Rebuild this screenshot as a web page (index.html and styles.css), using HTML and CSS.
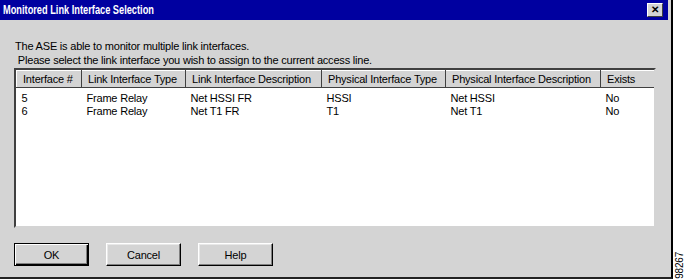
FILE: index.html
```html
<!DOCTYPE html>
<html lang="en">
<head>
    <meta charset="UTF-8">
    <title>Monitored Link Interface Selection</title>
    <link rel="stylesheet" href="styles.css">
</head>
<body>
    <div class="page">
        <div class="window">
            <div class="titlebar">
                <span class="title">Monitored Link Interface Selection</span>
                <span class="close-btn">&#x2715;</span>
            </div>

            <div class="content">
                <p class="intro">The ASE is able to monitor multiple link interfaces.<br>&nbsp;Please select the link interface you wish to assign to the current access line.</p>

                <!-- Lista de interfaces -->
                <div class="listview">
                    <table>
                        <thead>
                            <tr>
                                <th class="c1">Interface #</th>
                                <th class="c2">Link Interface Type</th>
                                <th class="c3">Link Interface Description</th>
                                <th class="c4">Physical Interface Type</th>
                                <th class="c5">Physical Interface Description</th>
                                <th class="c6">Exists</th>
                            </tr>
                        </thead>
                        <tbody>
                            <tr>
                                <td>5</td>
                                <td>Frame Relay</td>
                                <td>Net HSSI FR</td>
                                <td>HSSI</td>
                                <td>Net HSSI</td>
                                <td>No</td>
                            </tr>
                            <tr>
                                <td>6</td>
                                <td>Frame Relay</td>
                                <td>Net T1 FR</td>
                                <td>T1</td>
                                <td>Net T1</td>
                                <td>No</td>
                            </tr>
                        </tbody>
                    </table>
                </div>

                <div class="buttons">
                    <button class="btn default">OK</button>
                    <button class="btn">Cancel</button>
                    <button class="btn">Help</button>
                </div>
            </div>
        </div>
        <div class="fig-number">98267</div>
    </div>
</body>
</html>
```

FILE: styles.css
```css
body {
    margin: 0;
    background-color: #fff;
    font-family: "Liberation Sans", Arial, sans-serif;
    font-size: 11px;
    letter-spacing: -0.2px;
    color: #000;
}

.page {
    display: flex;
    width: 684px;
    height: 280px;
}

.window {
    width: 673px;
    height: 279px;
    box-sizing: border-box;
    background-color: #d4d4d4;
    border-right: 2px solid #000;
    border-bottom: 2px solid #222;
    padding-right: 3px;
    display: flex;
    flex-direction: column;
}

.titlebar {
    height: 20px;
    flex-shrink: 0;
    background-color: #0000a0;
    display: flex;
    align-items: center;
    justify-content: space-between;
    padding: 0 5px 0 3px;
}

.title {
    color: #fff;
    font-weight: bold;
    font-size: 12px;
    letter-spacing: 0;
    transform: scaleX(0.77);
    transform-origin: left center;
}

.close-btn {
    width: 14px;
    height: 12px;
    background-color: #d4d4d4;
    border: 1px solid;
    border-color: #fff #404040 #404040 #fff;
    font-size: 10px;
    font-weight: bold;
    line-height: 12px;
    text-align: center;
    letter-spacing: 0;
}

.content {
    padding: 0 12px 0 14px;
    flex: 1;
    display: flex;
    flex-direction: column;
}

.intro {
    margin: 19px 0 0 1px;
    line-height: 14px;
}

.listview {
    margin-top: 1px;
    height: 160px;
    flex-shrink: 0;
    box-sizing: border-box;
    background-color: #fff;
    border: 2px solid;
    border-color: #404040 #d4d4d4 #d4d4d4 #404040;
    overflow: hidden;
}

table {
    border-collapse: collapse;
    width: 638px;
    table-layout: fixed;
}

th {
    box-sizing: border-box;
    height: 17px;
    padding: 0 4px 0 6px;
    text-align: left;
    font-weight: normal;
    background-color: #d4d4d4;
    border: 1px solid;
    border-color: #fff #404040 #404040 #fff;
}

td {
    padding: 0 4px 0 5px;
    height: 13px;
    line-height: 13px;
}

tbody tr:first-child td {
    padding-top: 4px;
}

.c1 { width: 65px; }
.c2 { width: 104px; }
.c3 { width: 136px; }
.c4 { width: 124px; }
.c5 { width: 155px; }
.c6 { width: 54px; }

.buttons {
    display: flex;
    gap: 17px;
    margin-top: 15px;
}

.btn {
    width: 75px;
    height: 23px;
    font-family: "Liberation Sans", Arial, sans-serif;
    font-size: 11px;
    letter-spacing: -0.2px;
    background-color: #d4d4d4;
    border: 1px solid;
    border-color: #fff #000 #000 #fff;
    box-shadow: inset -1px -1px #808080, inset 1px 1px #e8e8e8;
    padding: 0;
}

.btn.default {
    border: 1px solid #000;
    box-shadow: inset 1px 1px #fff, inset -1px -1px #000, inset -2px -2px #808080;
}

.fig-number {
    writing-mode: vertical-rl;
    transform: rotate(180deg);
    align-self: flex-end;
    font-size: 10px;
    margin-left: 1px;
    padding-top: 1px;
}
```
